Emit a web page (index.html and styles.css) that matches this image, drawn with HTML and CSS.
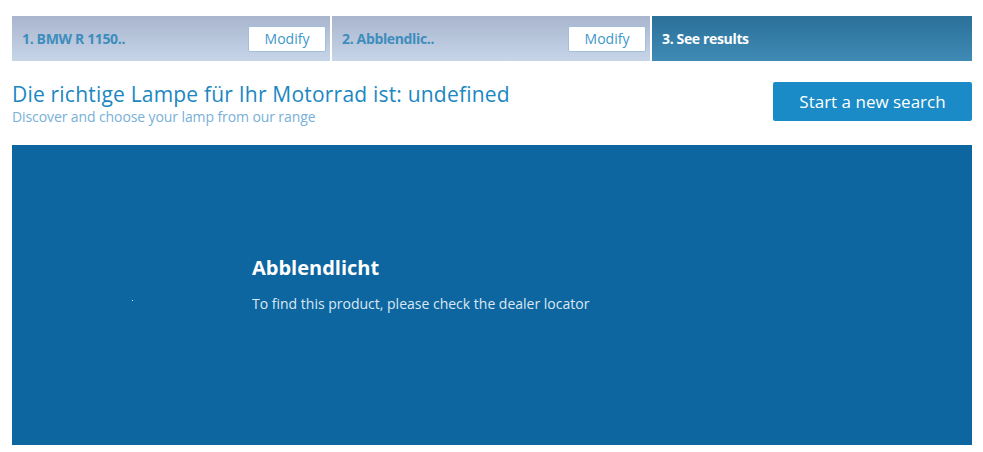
FILE: index.html
```html
<!DOCTYPE html>
<html lang="de">
<head>
    <meta charset="UTF-8">
    <meta name="viewport" content="width=device-width, initial-scale=1.0">
    <title>Lampenfinder</title>
    <link rel="stylesheet" href="styles.css">
</head>
<body>
    <div class="page">
        <div class="steps">
            <div class="step done">
                <span class="step-label">1. BMW R 1150..</span>
                <button class="modify">Modify</button>
            </div>
            <div class="step done">
                <span class="step-label">2. Abblendlic..</span>
                <button class="modify">Modify</button>
            </div>
            <div class="step active">
                <span class="step-label">3. See results</span>
            </div>
        </div>

        <div class="result-head">
            <div class="result-titles">
                <h1>Die richtige Lampe für Ihr Motorrad ist: undefined</h1>
                <p>Discover and choose your lamp from our range</p>
            </div>
            <button class="new-search">Start a new search</button>
        </div>

        <div class="result-panel">
            <div class="product-image"><span class="dot"></span></div>
            <div class="product-info">
                <h2>Abblendlicht</h2>
                <p>To find this product, please check the dealer locator</p>
            </div>
        </div>
    </div>
</body>
</html>
```

FILE: styles.css
```css
* {
    box-sizing: border-box;
    padding: 0;
    margin: 0;
    font-family: 'Open Sans', sans-serif;
}
body {
    background: #fff;
}
.page {
    width: 960px;
    margin-left: 12px;
    padding-top: 16px;
}
.steps {
    display: flex;
    gap: 2px;
    height: 45px;
}
.step {
    width: 318px;
    display: flex;
    align-items: center;
    justify-content: space-between;
    padding: 0 4px 0 10px;
}
.step.active {
    flex: 1;
}
.step.done {
    background: linear-gradient(to bottom, #a8b5cd, #c7d5e9);
}
.step.active {
    background: linear-gradient(to bottom, #2a7099, #3f8bb6);
}
.step-label {
    font-size: 14px;
    font-weight: 700;
    color: #3d8dbd;
    letter-spacing: -0.35px;
}
.step.active .step-label {
    color: #fff;
}
.modify {
    width: 78px;
    height: 26px;
    background: #fff;
    border: 1px solid #9fc0d8;
    border-radius: 2px;
    color: #3d98c9;
    font-family: 'Open Sans', sans-serif;
    font-size: 14px;
}
.result-head {
    display: flex;
    justify-content: space-between;
    align-items: flex-start;
    padding: 19px 0 19px;
}
.result-titles h1 {
    font-size: 21px;
    font-weight: 400;
    color: #1b87c2;
    line-height: 28px;
    letter-spacing: 0.2px;
}
.result-titles p {
    font-size: 14px;
    color: #78b0d8;
    line-height: 18px;
    letter-spacing: -0.1px;
}
.new-search {
    width: 199px;
    height: 39px;
    margin-top: 2px;
    background: #1a8bc6;
    border: none;
    border-radius: 2px;
    color: #fff;
    font-family: 'Open Sans', sans-serif;
    font-size: 17px;
}
.result-panel {
    display: flex;
    align-items: flex-start;
    height: 300px;
    background: #0d66a0;
    color: #fff;
}
.product-image {
    width: 240px;
    display: flex;
    justify-content: center;
    padding-top: 155px;
}
.dot {
    width: 1px;
    height: 1px;
    background: #fff;
}
.product-info {
    padding-top: 111px;
}
.product-info h2 {
    font-size: 20px;
    font-weight: 700;
    line-height: 24px;
    margin-bottom: 14px;
}
.product-info p {
    font-size: 14px;
    line-height: 19px;
    color: #dbe8f3;
}
```
